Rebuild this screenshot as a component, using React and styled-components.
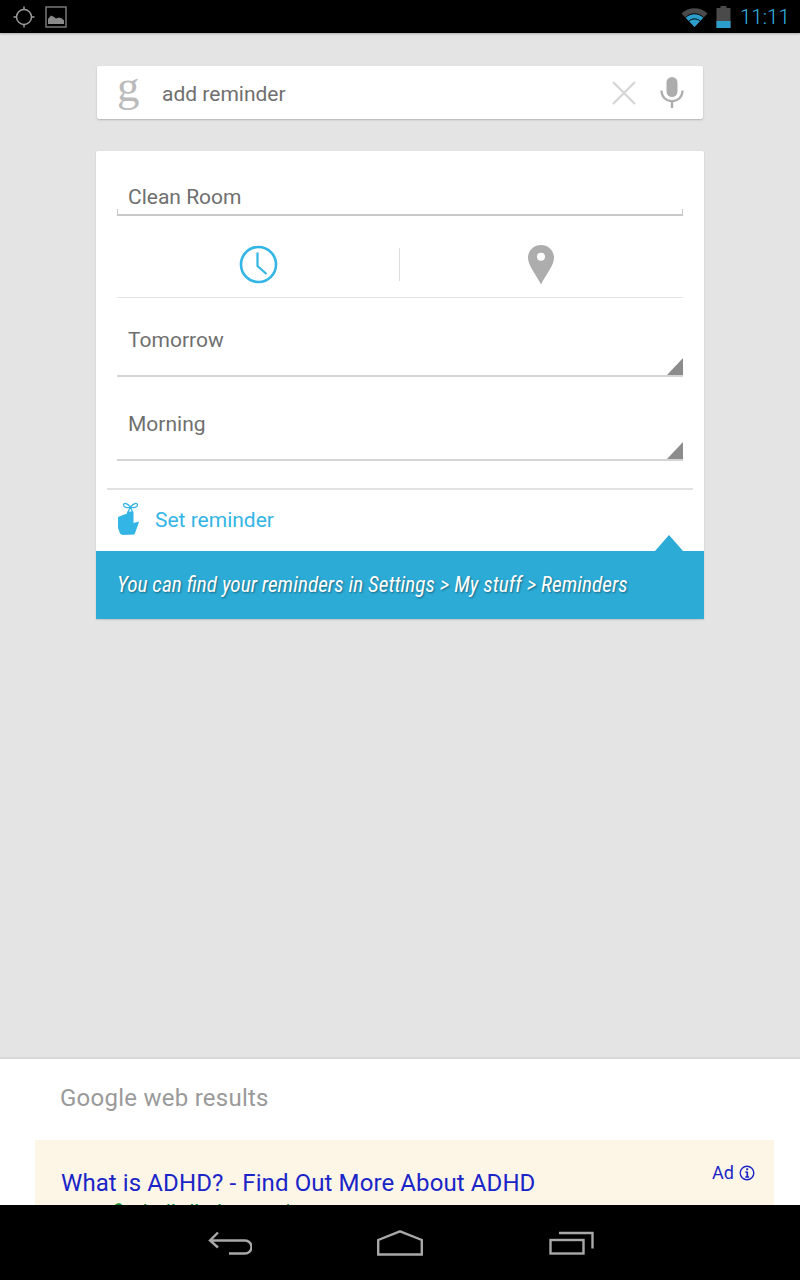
import React from 'react';
import styled, { createGlobalStyle } from 'styled-components';

const Global = createGlobalStyle`
	html, body {
		margin: 0;
		padding: 0;
		height: 1280px;
		overflow: hidden;
		background: #e4e4e4;
		font-family: Roboto, "Liberation Sans", sans-serif;
	}
	* {
		box-sizing: border-box;
	}
`;

const App = () => (
	<Screen>
		<Global />
		<StatusBar>
			<StatusLeft>
				<svg width="22" height="22" viewBox="0 0 22 22" fill="none" stroke="#9a9a9a" strokeWidth="1.5">
					<circle cx="11" cy="11" r="7.5" />
					<path d="M11 0.5v3.5M11 18v3.5M0.5 11H4M18 11h3.5" />
				</svg>
				<svg width="22" height="22" viewBox="0 0 22 22">
					<rect x="1" y="1" width="20" height="20" fill="none" stroke="#777" strokeWidth="1.5" />
					<path d="M3 18v-5l3-3.5 3 1.5 2 1.5 3-1 3 1 2 2v3.5z" fill="#8a8a8a" />
				</svg>
			</StatusLeft>
			<StatusRight>
				<svg width="27" height="20" viewBox="0 0 27 20">
					<path d="M0.5 6.5C7.5 -0.5 19.5 -0.5 26.5 6.5L13.5 20z" fill="#4a4a4a" />
					<path d="M4.5 10.5C9.5 5.5 17.5 5.5 22.5 10.5L13.5 20z" fill="#2b9ecb" />
					<path d="M4.5 10.5C9.5 5.5 17.5 5.5 22.5 10.5" fill="none" stroke="#000" strokeWidth="1" />
					<path d="M8 14C11 11.2 16 11.2 19 14" fill="none" stroke="#000" strokeWidth="1" />
				</svg>
				<svg width="15" height="22" viewBox="0 0 15 22">
					<path d="M4.5 0h6v2h4v20H.5V2h4z" fill="#4a4a4a" />
					<rect x="0.5" y="15" width="14" height="7" fill="#2b9ecb" />
				</svg>
				<Clock>11:11</Clock>
			</StatusRight>
		</StatusBar>

		<Main>
			<SearchBar>
				<GoogleG>g</GoogleG>
				<SearchText>add reminder</SearchText>
				<svg width="26" height="26" viewBox="0 0 26 26" stroke="#d5d5d5" strokeWidth="2.2">
					<path d="M2 2l22 22M24 2L2 24" />
				</svg>
				<MicIcon width="24" height="31" viewBox="0 0 24 31">
					<rect x="6.5" y="0" width="11" height="20" rx="5.5" fill="#adadad" />
					<path d="M1.5 13.5c0 6.5 4.5 10.5 10.5 10.5s10.5-4 10.5-10.500" fill="none" stroke="#adadad" strokeWidth="2.2" />
					<path d="M12 24v7" stroke="#adadad" strokeWidth="2.4" />
				</MicIcon>
			</SearchBar>

			<Card>
				<Form>
					<TitleField>Clean Room</TitleField>
					<TriggerRow>
						<TriggerCell>
							<svg width="40" height="40" viewBox="0 0 40 40" fill="none" stroke="#33b5e5">
								<circle cx="19.5" cy="19.5" r="17.5" strokeWidth="2.6" />
								<path d="M18.5 7.5V21l9 8" strokeWidth="2.2" />
							</svg>
						</TriggerCell>
						<TriggerDivider />
						<TriggerCell>
							<svg width="28" height="40" viewBox="0 0 28 40">
								<path
									fillRule="evenodd"
									d="M14 0c7.400 0 13 5.600 13 12.800 0 8.200-8.500 17.200-13 26.700C9.500 30 1 21 1 12.800 1 5.600 6.600 0 14 0zm0 7.700a4 4 0 1 0 0 8 4 4 0 0 0 0-8z"
									fill="#adadad"
								/>
							</svg>
						</TriggerCell>
					</TriggerRow>
					<SelectField>Tomorrow</SelectField>
					<SelectField>Morning</SelectField>
				</Form>
				<ActionRow>
					<HandIcon width="24" height="33" viewBox="0 0 24 33">
						<path
							d="M1 15l9-3.500V9.500h6.500V21l5.500-1.500-1 3.500-3.500 9.500L5.500 33 3 31.500 1 26z"
							fill="#33b5e5"
						/>
						<path
							d="M13.500 5C10 .5 6.500.8 6.500 3s4 3.500 7 2zm0 0c3.500-4.500 7-4.200 7-2s-4 3.500-7 2zm0 0L11 10m2.500-5l2 5"
							fill="none"
							stroke="#33b5e5"
							strokeWidth="1.300"
						/>
					</HandIcon>
					<ActionLabel>Set reminder</ActionLabel>
				</ActionRow>
				<Banner>You can find your reminders in Settings &gt; My stuff &gt; Reminders</Banner>
			</Card>
		</Main>

		<Results>
			<ResultsTitle>Google web results</ResultsTitle>
			<AdBox>
				<AdBadge>
					Ad
					<svg width="16" height="16" viewBox="0 0 16 16" fill="none" stroke="#1a25c8">
						<circle cx="8" cy="8" r="6.800" strokeWidth="1.400" />
						<path d="M8.300 6.800v5M6.300 12h3.800M6.300 7h2" strokeWidth="1.700" />
						<path d="M8.200 3.300v1.900" strokeWidth="2" />
					</svg>
				</AdBadge>
				<AdTitle>What is ADHD? - Find Out More About ADHD</AdTitle>
				<AdUrl>www.findadhdhelp.com/</AdUrl>
			</AdBox>
		</Results>

		<NavBar>
			<svg width="44" height="24" viewBox="0 0 44 24" fill="none" stroke="#a8a8a8" strokeWidth="2.400">
				<path d="M10 1.500L2 9.500l8 7M2 9.500h35a5.500 5.500 0 0 1 0 13H21" />
			</svg>
			<svg width="46" height="26" viewBox="0 0 46 26" fill="none" stroke="#a8a8a8" strokeWidth="2.400">
				<path d="M1.200 10L23 1.300 44.800 10v14.500H1.200z" />
			</svg>
			<svg width="46" height="24" viewBox="0 0 46 24" fill="none" stroke="#a8a8a8" strokeWidth="2.400">
				<path d="M11 2h33.500v15.500" />
				<rect x="2.500" y="9" width="33" height="13.500" />
			</svg>
		</NavBar>
	</Screen>
);

export default App;

const Screen = styled.div`
	width: 800px;
	height: 1280px;
	display: flex;
	flex-direction: column;
	overflow: hidden;
`;

const StatusBar = styled.div`
	flex: 0 0 33px;
	background: #000;
	display: flex;
	justify-content: space-between;
	align-items: center;
	box-shadow: 0 1px 2px rgba(0, 0, 0, 0.25);
	position: relative;
`;

const StatusLeft = styled.div`
	display: flex;
	align-items: center;
	gap: 10px;
	padding-left: 13px;
`;

const StatusRight = styled.div`
	display: flex;
	align-items: center;
	gap: 8px;
	padding-right: 10px;
`;

const Clock = styled.span`
	width: 50px;
	color: #33b5e5;
	font-size: 20.500px;
	font-weight: 300;
	margin-left: 1px;
	white-space: nowrap;
`;

const Main = styled.div`
	flex: 1;
	background: #e4e4e4;
	padding: 33px 96px 0;
`;

const SearchBar = styled.div`
	height: 53px;
	margin: 0 1px;
	background: #fff;
	border-radius: 2px;
	box-shadow: 0 1px 2px rgba(0, 0, 0, 0.22);
	display: flex;
	align-items: center;
	padding: 0 19px 0 20px;
`;

const GoogleG = styled.span`
	font-family: "Liberation Serif", serif;
	font-size: 45px;
	line-height: 44px;
	color: #bbbbbb;
	width: 45px;
	margin-top: -13px;
`;

const SearchText = styled.span`
	flex: 1;
	font-size: 21px;
	color: #6f6f6f;
	margin-top: 2px;
`;

const MicIcon = styled.svg`
	margin-left: 23px;
`;

const Card = styled.div`
	margin-top: 32px;
	background: #fff;
	border-radius: 2px 2px 0 0;
	box-shadow: 0 1px 2px rgba(0, 0, 0, 0.15);
`;

const Form = styled.div`
	padding: 25px 21px 0;
`;

const TitleField = styled.div`
	height: 40px;
	padding: 7px 11px 0;
	font-size: 21px;
	line-height: 28px;
	color: #6f6f6f;
	border-bottom: 2px solid #c8c8c8;
	position: relative;

	&::before,
	&::after {
		content: '';
		position: absolute;
		bottom: 0;
		width: 1px;
		height: 5px;
		background: #c8c8c8;
	}

	&::before {
		left: 0;
	}

	&::after {
		right: 0;
	}
`;

const TriggerRow = styled.div`
	height: 82px;
	padding-top: 16px;
	display: flex;
	align-items: center;
	border-bottom: 1px solid #e4e4e4;
`;

const TriggerCell = styled.div`
	flex: 1;
	display: flex;
	justify-content: center;
`;

const TriggerDivider = styled.div`
	width: 1px;
	height: 33px;
	margin-left: -2px;
	background: #dcdcdc;
`;

const SelectField = styled.div`
	height: 79px;
	padding: 28px 11px 0;
	font-size: 21px;
	line-height: 28px;
	color: #6f6f6f;
	border-bottom: 2px solid #d4d4d4;
	position: relative;

	& + & {
		margin-top: 5px;
	}

	&::after {
		content: '';
		position: absolute;
		right: 0;
		bottom: 0;
		width: 16px;
		height: 17px;
		background: #8c8c8c;
		clip-path: polygon(100% 0, 100% 100%, 0 100%);
	}
`;

const ActionRow = styled.div`
	margin: 27px 11px 0;
	height: 63px;
	border-top: 2px solid #e2e2e2;
	display: flex;
	align-items: center;
	gap: 14px;
	padding-left: 10px;
`;

const HandIcon = styled.svg`
	margin-top: -4px;
`;

const ActionLabel = styled.span`
	font-size: 21px;
	color: #33b5e5;
	margin-top: -2px;
`;

const Banner = styled.div`
	height: 68px;
	background: #2babd6;
	color: #fff;
	font-size: 21.300px;
	font-style: italic;
	font-stretch: 75%;
	line-height: 68px;
	padding-left: 21px;
	white-space: nowrap;
	text-shadow: 1px 1px 2px rgba(0, 0, 0, 0.4);
	position: relative;

	&::before {
		content: '';
		position: absolute;
		right: 21px;
		top: -16px;
		width: 28px;
		height: 16px;
		background: #2babd6;
		clip-path: polygon(50% 0, 100% 100%, 0 100%);
	}
`;

const Results = styled.div`
	flex: 0 0 148px;
	background: #fff;
	border-top: 2px solid #d8d8d8;
	overflow: hidden;
`;

const ResultsTitle = styled.div`
	height: 81px;
	padding: 25px 0 0 60px;
	font-size: 24px;
	line-height: 28px;
	letter-spacing: 0.25px;
	color: #9a9a9a;
`;

const AdBox = styled.div`
	margin: 0 26px 0 35px;
	height: 120px;
	background: #fdf6e6;
	padding: 28px 0 0 26px;
	position: relative;
`;

const AdBadge = styled.div`
	position: absolute;
	top: 21px;
	right: 19px;
	display: flex;
	align-items: center;
	gap: 5px;
	font-size: 18px;
	line-height: 24px;
	color: #1a25c8;
`;

const AdTitle = styled.div`
	font-size: 24px;
	line-height: 30px;
	letter-spacing: 0.1px;
	color: #1a25c8;
`;

const AdUrl = styled.div`
	font-size: 21px;
	line-height: 28px;
	color: #0a8a2a;
`;

const NavBar = styled.div`
	flex: 0 0 75px;
	background: #000;
	display: flex;
	justify-content: center;
	align-items: center;
	gap: 125px;
	padding-left: 2px;
`;
